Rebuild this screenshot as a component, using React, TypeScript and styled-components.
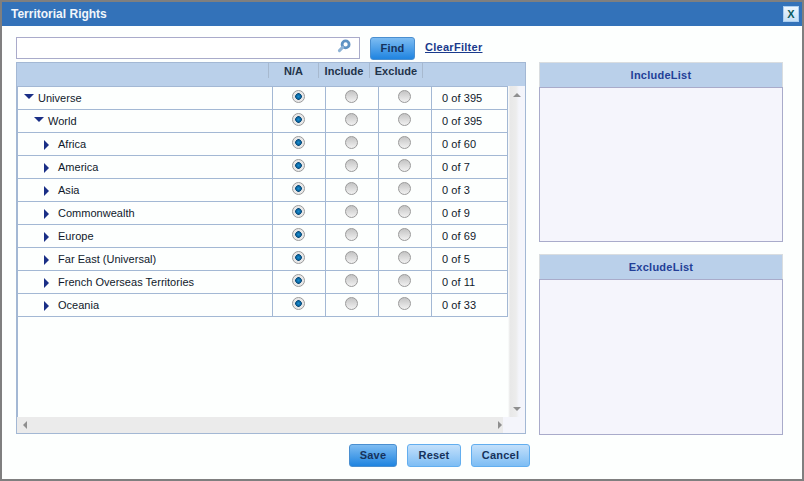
import React from "react";
import styled, { createGlobalStyle } from "styled-components";

const Global = createGlobalStyle`
  html, body { margin: 0; padding: 0; background: #fff; }
  body { font-family: "Liberation Sans", Arial, sans-serif; }
`;

const Dialog = styled.div`
  width: 804px;
  height: 481px;
  box-sizing: border-box;
  border: 2px solid #7f7f7f;
  background: #fdfffe;
  display: flex;
  flex-direction: column;
`;

const TitleBar = styled.div`
  height: 24px;
  flex: none;
  background: #3372b9;
  display: flex;
  align-items: center;
  justify-content: space-between;
  padding: 0 3px 0 9px;
`;

const Title = styled.div`
  color: #f2f6fb;
  font-size: 12px;
  font-weight: 700;
`;

const CloseBtn = styled.div`
  width: 14px;
  height: 14px;
  border: 1px solid #a9cdf0;
  background: linear-gradient(#eef6fd, #c5dff5);
  color: #0b5a5e;
  font-size: 11px;
  font-weight: 700;
  display: flex;
  align-items: center;
  justify-content: center;
`;

const Body = styled.div`
  flex: 1;
  display: flex;
  flex-direction: column;
  padding: 11px 19px 0 14px;
  min-height: 0;
`;

const Columns = styled.div`
  display: flex;
  gap: 13px;
  height: 398px;
  flex: none;
`;

const LeftCol = styled.div`
  width: 510px;
  flex: none;
  display: flex;
  flex-direction: column;
  padding-bottom: 1px;
  box-sizing: border-box;
`;

const RightCol = styled.div`
  width: 244px;
  flex: none;
  display: flex;
  flex-direction: column;
  gap: 12px;
  padding-top: 25px;
`;

const FilterBar = styled.div`
  height: 25px;
  flex: none;
  display: flex;
  align-items: flex-start;
`;

const SearchBox = styled.div`
  width: 344px;
  height: 22px;
  box-sizing: border-box;
  border: 1px solid #a9abca;
  background: #fff;
  display: flex;
  align-items: center;
  justify-content: flex-end;
  padding: 0 8px 4px 0;
`;

const BlueButton = styled.div<{ $active?: boolean }>`
  height: 23px;
  box-sizing: border-box;
  padding-bottom: 2px;
  border: 1px solid ${(p) => (p.$active ? "#4a8fd0" : "#62aeef")};
  border-radius: 3px;
  background: ${(p) =>
    p.$active
      ? "linear-gradient(#7dbcf2, #1f84e0)"
      : "linear-gradient(#c3e0fb, #7dbdf4)"};
  color: #16325c;
  font-size: 11px;
  font-weight: 700;
  letter-spacing: 0.2px;
  display: flex;
  align-items: center;
  justify-content: center;
`;

const FindButton = styled(BlueButton)`
  width: 45px;
  margin-left: 10px;
`;

const ClearFilter = styled.a`
  margin-left: 10px;
  color: #1a3a8c;
  font-size: 11px;
  font-weight: 700;
  letter-spacing: 0.28px;
  text-decoration: underline;
  line-height: 20px;
`;

const TableFrame = styled.div`
  flex: 1;
  box-sizing: border-box;
  border: 1px solid #a3b8d4;
  border-top: 0;
  display: flex;
  flex-direction: column;
  min-height: 0;
  background: #fdfffe;
`;

const HeaderRow = styled.div`
  height: 24px;
  flex: none;
  box-sizing: border-box;
  background: #bad0ea;
  border-top: 1px solid #a3b8d4;
  display: grid;
  grid-template-columns: 252px 50px 51px 53px 1fr;
`;

const HeaderCell = styled.div`
  height: 15px;
  box-sizing: border-box;
  border-right: 1px solid #a7b9cf;
  color: #1f3349;
  font-size: 11px;
  font-weight: 700;
  letter-spacing: 0.05px;
  display: flex;
  align-items: center;
  justify-content: center;
`;

const Middle = styled.div`
  flex: 1;
  display: flex;
  min-height: 0;
`;

const Rows = styled.div`
  width: 491px;
  flex: none;
  box-sizing: border-box;
  border-left: 1px solid #a3b8d4;
`;

const Row = styled.div`
  display: grid;
  grid-template-columns: 255px 53px 53px 53px 76px;
  height: 23px;
  box-sizing: border-box;
  border-top: 1px solid #a3b8d4;
  &:last-child { border-bottom: 1px solid #a3b8d4; height: 24px; }
`;

const NameCell = styled.div<{ $level: number }>`
  padding-left: ${(p) => 6 + p.$level * 10}px;
  display: flex;
  align-items: center;
  color: #10192b;
  font-size: 11px;
  letter-spacing: 0.02px;
  gap: ${(p) => (p.$level === 2 ? 9 : 4)}px;
  border-right: 1px solid #a3b8d4;
`;

const RadioCell = styled.div`
  display: flex;
  align-items: center;
  justify-content: center;
  border-right: 1px solid #a3b8d4;
  padding: 0 2px 3px 0;
`;

const CountCell = styled.div`
  display: flex;
  align-items: center;
  padding-left: 10px;
  color: #10192b;
  font-size: 11px;
  letter-spacing: 0.06px;
  border-right: 1px solid #a3b8d4;
`;

const Radio = styled.span<{ $on?: boolean }>`
  width: 13px;
  height: 13px;
  box-sizing: border-box;
  border-radius: 50%;
  border: 1px solid #9a9a9a;
  background: ${(p) =>
    p.$on
      ? "radial-gradient(circle at 50% 50%, #1f8fd0 0, #0a6aa6 2px, #0b4a78 3px, #e4e4e4 3.6px, #f4f4f4 100%)"
      : "linear-gradient(#c4c4c4, #f1f1f1)"};
`;

const VScroll = styled.div`
  flex: 1;
  background: linear-gradient(90deg, #fdfffe 0, #e8e8e8 2px, #ececec 8px, #f4f5fb 11px);
  display: flex;
  flex-direction: column;
  align-items: center;
  justify-content: space-between;
  padding: 5px 0 4px;
`;

const HScrollRow = styled.div`
  height: 16px;
  flex: none;
  display: flex;
`;

const HScroll = styled.div`
  width: 486px;
  flex: none;
  background: #ebebeb;
  display: flex;
  align-items: center;
  justify-content: space-between;
  padding: 0 0 0 3px;
  box-sizing: border-box;
`;

const Corner = styled.div`
  flex: 1;
  background: #f4f5fb;
`;

const ListPanel = styled.div<{ $grow?: boolean }>`
  display: flex;
  flex-direction: column;
  flex: ${(p) => (p.$grow ? "1" : "none")};
  height: ${(p) => (p.$grow ? "auto" : "180px")};
  min-height: 0;
`;

const ListHeader = styled.div`
  height: 25px;
  flex: none;
  box-sizing: border-box;
  background: #bad0ea;
  border: 1px solid #d9dde0;
  border-bottom: 0;
  color: #233f97;
  font-size: 11px;
  font-weight: 700;
  letter-spacing: 0.25px;
  display: flex;
  align-items: center;
  justify-content: center;
`;

const ListBody = styled.div`
  flex: 1;
  box-sizing: border-box;
  background: #f5f5fc;
  border: 1px solid #a9abca;
`;

const Footer = styled.div`
  display: flex;
  justify-content: flex-start;
  gap: 10px;
  padding: 9px 0 0 333px;
`;

const SaveButton = styled(BlueButton)`width: 48px;`;
const ResetButton = styled(BlueButton)`width: 54px;`;
const CancelButton = styled(BlueButton)`width: 59px;`;

const Down = () => (
  <svg width="10" height="5" viewBox="0 0 10 5" style={{ flex: "none", marginBottom: 3 }}>
    <path d="M0 0h10L5 5z" fill="#1a2f86" />
  </svg>
);
const Right = () => (
  <svg width="5" height="10" viewBox="0 0 5 10" style={{ flex: "none", marginTop: 2 }}>
    <path d="M0 0l5 5-5 5z" fill="#1a2f86" />
  </svg>
);
const Search = () => (
  <svg width="14" height="14" viewBox="0 0 14 14">
    <circle cx="8.6" cy="5.4" r="3.5" fill="none" stroke="#5f93c4" strokeWidth="2.8" />
    <path d="M5.6 8.4L2.4 11.6" stroke="#8fb3d6" strokeWidth="3" strokeLinecap="round" />
  </svg>
);
const Tri = ({ d }: { d: string }) => (
  <svg width="10" height="8" viewBox="0 0 10 8"><path d={d} fill="#8f8f8f" /></svg>
);

const rows: [string, number, string][] = [
  ["Universe", 0, "0 of 395"],
  ["World", 1, "0 of 395"],
  ["Africa", 2, "0 of 60"],
  ["America", 2, "0 of 7"],
  ["Asia", 2, "0 of 3"],
  ["Commonwealth", 2, "0 of 9"],
  ["Europe", 2, "0 of 69"],
  ["Far East (Universal)", 2, "0 of 5"],
  ["French Overseas Territories", 2, "0 of 11"],
  ["Oceania", 2, "0 of 33"],
];

export default function App() {
  return (
    <>
      <Global />
      <Dialog>
        <TitleBar>
          <Title>Territorial Rights</Title>
          <CloseBtn>X</CloseBtn>
        </TitleBar>
        <Body>
          <Columns>
            <LeftCol>
              <FilterBar>
                <SearchBox><Search /></SearchBox>
                <FindButton $active>Find</FindButton>
                <ClearFilter>ClearFilter</ClearFilter>
              </FilterBar>
              <TableFrame>
                <HeaderRow>
                  <HeaderCell />
                  <HeaderCell>N/A</HeaderCell>
                  <HeaderCell>Include</HeaderCell>
                  <HeaderCell>Exclude</HeaderCell>
                </HeaderRow>
                <Middle>
                  <Rows>
                    {rows.map(([name, level, count]) => (
                      <Row key={name}>
                        <NameCell $level={level}>
                          {level === 2 ? <Right /> : <Down />}
                          <span>{name}</span>
                        </NameCell>
                        <RadioCell><Radio $on /></RadioCell>
                        <RadioCell><Radio /></RadioCell>
                        <RadioCell><Radio /></RadioCell>
                        <CountCell>{count}</CountCell>
                      </Row>
                    ))}
                  </Rows>
                  <VScroll>
                    <Tri d="M5 2l4 4H1z" />
                    <Tri d="M1 2h8L5 6z" />
                  </VScroll>
                </Middle>
                <HScrollRow>
                  <HScroll>
                    <Tri d="M3 4l4-4v8z" />
                    <Tri d="M9 4L5 0v8z" />
                  </HScroll>
                  <Corner />
                </HScrollRow>
              </TableFrame>
            </LeftCol>
            <RightCol>
              <ListPanel>
                <ListHeader>IncludeList</ListHeader>
                <ListBody />
              </ListPanel>
              <ListPanel $grow>
                <ListHeader>ExcludeList</ListHeader>
                <ListBody />
              </ListPanel>
            </RightCol>
          </Columns>
          <Footer>
            <SaveButton $active>Save</SaveButton>
            <ResetButton>Reset</ResetButton>
            <CancelButton>Cancel</CancelButton>
          </Footer>
        </Body>
      </Dialog>
    </>
  );
}
